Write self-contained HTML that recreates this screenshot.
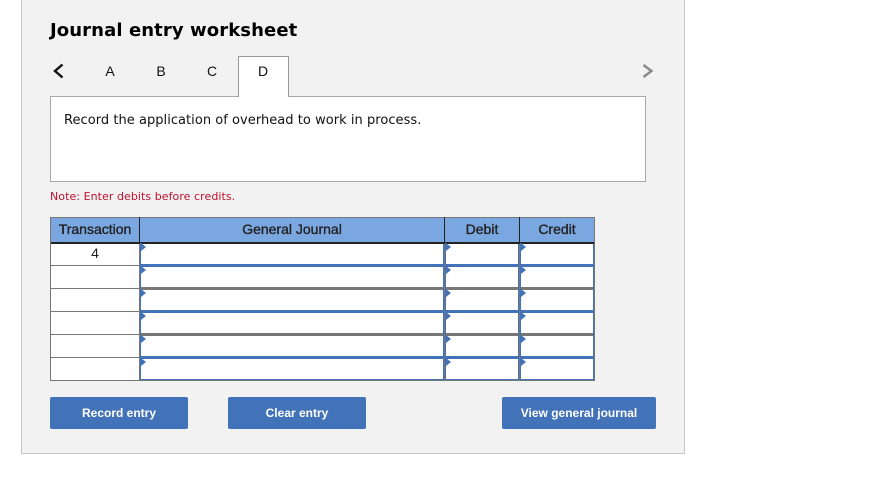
<!DOCTYPE html>
<html><head><meta charset="utf-8">
<style>
html,body{margin:0;padding:0;background:#fff;width:880px;height:479px;overflow:hidden}
div,svg{position:absolute;box-sizing:border-box}
.t{white-space:nowrap;color:#000}
.dv{font-family:"DejaVu Sans",Verdana,sans-serif}
.ls{font-family:"Liberation Sans",Arial,sans-serif}
.tab{font-family:"Liberation Sans",Arial,sans-serif;font-size:14px;top:63px;width:20px;text-align:center;line-height:16px;color:#111}
.h{font-family:"Liberation Sans",Arial,sans-serif;font-size:14px;top:221px;line-height:16px;text-align:center;color:#222;-webkit-text-stroke:.35px #222}
.btn{background:#4272b8;border-radius:2px;top:397px;height:32px;color:#fff;font-family:"Liberation Sans",Arial,sans-serif;font-weight:bold;font-size:12px;line-height:32px;text-align:center;letter-spacing:0}
.g{background:#777}.b{background:#4272b8}.k{background:#222}
</style></head>
<body>
<div style="left:21px;top:-2px;width:664px;height:456px;background:#f2f2f2;border:1px solid #c6c6c6"></div>
<div class="t dv" style="left:50px;top:19px;font-size:18px;line-height:23px;font-weight:bold;letter-spacing:.1px">Journal entry worksheet</div>

<svg style="left:50px;top:62px" width="16" height="18" viewBox="0 0 16 18"><path d="M12.5 2.5 L5 9 L12.5 15.5" fill="none" stroke="#111" stroke-width="2.4"/></svg>
<div class="tab" style="left:100px">A</div>
<div class="tab" style="left:151px">B</div>
<div class="tab" style="left:202px">C</div>

<div style="left:50px;top:96px;width:596px;height:86px;background:#fff;border:1px solid #aaa"></div>
<div style="left:238px;top:56px;width:51px;height:41px;background:#fff;border:1px solid #999;border-bottom:none"></div>
<div class="tab" style="left:253px">D</div>
<svg style="left:640px;top:62px" width="16" height="18" viewBox="0 0 16 18"><path d="M3.5 3 L11.5 9 L3.5 15" fill="none" stroke="#8a8a8a" stroke-width="2.4"/></svg>

<div class="t dv" style="left:64px;top:113px;font-size:13px;line-height:16px;color:#111;letter-spacing:.04px">Record the application of overhead to work in process.</div>
<div class="t dv" style="left:50px;top:190px;font-size:11px;line-height:14px;color:#c0102c;letter-spacing:.06px">Note: Enter debits before credits.</div>

<!-- table -->
<div style="left:50px;top:217px;width:545px;height:164px;background:#fff"></div>
<div style="left:50px;top:217px;width:545px;height:26px;background:#7ba7e1"></div>
<div class="g" style="left:50px;top:217px;width:545px;height:1px"></div>
<div class="k" style="left:50px;top:242px;width:545px;height:2px"></div>

<!-- left column rows -->
<div class="g" style="left:50px;top:265px;width:90px;height:1px"></div>
<div class="g" style="left:50px;top:288px;width:90px;height:1px"></div>
<div class="g" style="left:50px;top:311px;width:90px;height:1px"></div>
<div class="g" style="left:50px;top:334px;width:90px;height:1px"></div>
<div class="g" style="left:50px;top:357px;width:90px;height:1px"></div>

<!-- input row lines -->
<div class="b" style="left:140px;top:264px;width:455px;height:3px"></div>
<div class="g" style="left:140px;top:287px;width:455px;height:3px"></div>
<div class="b" style="left:140px;top:310px;width:455px;height:3px"></div>
<div class="g" style="left:140px;top:333px;width:455px;height:3px"></div>
<div class="b" style="left:140px;top:356px;width:455px;height:3px"></div>
<div class="g" style="left:50px;top:380px;width:545px;height:1px"></div>
<div class="b" style="left:140px;top:379px;width:455px;height:1px"></div>

<!-- columns -->
<div class="g" style="left:50px;top:217px;width:1px;height:164px"></div>
<div class="k" style="left:139px;top:217px;width:1px;height:26px"></div>
<div class="k" style="left:444px;top:217px;width:1px;height:26px"></div>
<div class="k" style="left:519px;top:217px;width:1px;height:26px"></div>
<div class="g" style="left:139px;top:244px;width:1px;height:137px"></div>
<div class="b" style="left:140px;top:244px;width:1px;height:136px"></div>
<div class="g" style="left:444px;top:244px;width:1px;height:137px"></div>
<div class="b" style="left:443px;top:244px;width:1px;height:136px"></div>
<div class="b" style="left:445px;top:244px;width:1px;height:136px"></div>
<div class="g" style="left:519px;top:244px;width:1px;height:137px"></div>
<div class="b" style="left:518px;top:244px;width:1px;height:136px"></div>
<div class="b" style="left:520px;top:244px;width:1px;height:136px"></div>
<div class="g" style="left:594px;top:217px;width:1px;height:164px"></div>
<div class="b" style="left:593px;top:244px;width:1px;height:136px"></div>

<!-- corner markers -->
<svg style="left:140px;top:243px" width="455" height="130" viewBox="0 0 455 130" fill="#4272b8">
<path d="M0 0h1l5 4-5 4h-1z"/>
<path d="M0 23h1l5 4-5 4h-1zM0 46h1l5 4-5 4h-1zM0 69h1l5 4-5 4h-1zM0 92h1l5 4-5 4h-1zM0 115h1l5 4-5 4h-1z"/>
<path d="M305 0h1l5 4-5 4h-1zM305 23h1l5 4-5 4h-1zM305 46h1l5 4-5 4h-1zM305 69h1l5 4-5 4h-1zM305 92h1l5 4-5 4h-1zM305 115h1l5 4-5 4h-1z"/>
<path d="M380 0h1l5 4-5 4h-1zM380 23h1l5 4-5 4h-1zM380 46h1l5 4-5 4h-1zM380 69h1l5 4-5 4h-1zM380 92h1l5 4-5 4h-1zM380 115h1l5 4-5 4h-1z"/>
</svg>

<div class="h" style="left:51px;width:88px">Transaction</div>
<div class="h" style="left:140px;width:304px">General Journal</div>
<div class="h" style="left:445px;width:74px">Debit</div>
<div class="h" style="left:520px;width:74px">Credit</div>
<div class="t ls" style="left:51px;top:245px;width:88px;text-align:center;font-size:14px;line-height:16px;color:#222">4</div>

<div class="btn" style="left:50px;width:138px">Record entry</div>
<div class="btn" style="left:228px;width:138px">Clear entry</div>
<div class="btn" style="left:502px;width:154px">View general journal</div>
</body></html>
